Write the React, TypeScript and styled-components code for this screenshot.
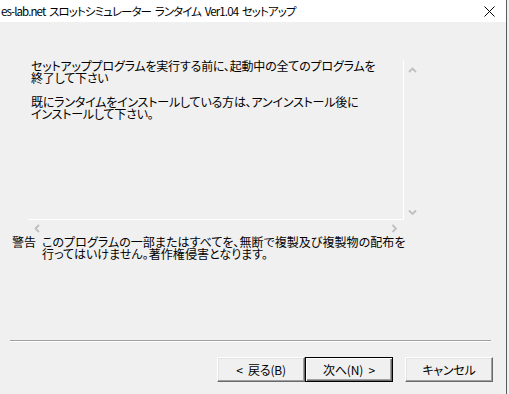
import React from "react";
import styled, { createGlobalStyle } from "styled-components";

const GlobalStyle = createGlobalStyle`
  html, body {
    margin: 0;
    padding: 0;
    background: #f0f0f0;
  }
  body {
    font-family: "Noto Sans CJK JP", "DejaVu Sans", sans-serif;
    font-size: 12px;
    color: #000;
    font-feature-settings: "palt";
  }
`;

const Window = styled.div`
  width: 507px;
  height: 394px;
  box-sizing: border-box;
  border-right: 1px solid #5c5c5c;
  background: #f0f0f0;
  display: flex;
  flex-direction: column;
`;

const TitleBar = styled.div`
  height: 22px;
  background: #ffffff;
  display: flex;
  align-items: center;
  justify-content: space-between;
  padding-left: 1px;
`;

const Title = styled.span`
  font-size: 11.5px;
  line-height: 22px;
  letter-spacing: -0.9px;
  word-spacing: 2px;
  white-space: nowrap;
`;

const CloseButton = styled.div`
  width: 30px;
  height: 22px;
  display: flex;
  align-items: center;
  justify-content: center;
  margin-right: 2px;
`;

const Body = styled.div`
  flex: 1;
  display: flex;
  flex-direction: column;
  padding-top: 38px;
`;

const Memo = styled.div`
  margin-left: 28px;
  display: grid;
  grid-template-columns: 376px 17px;
  grid-template-rows: 160px 17px;
  width: 393px;
`;

const MemoText = styled.div`
  box-sizing: border-box;
  border-right: 1px solid #ffffff;
  border-bottom: 1px solid #ffffff;
  padding-left: 3px;
  line-height: 12px;
  letter-spacing: -0.2px;
`;

const Para = styled.p`
  margin: 0 0 12px 0;
`;

const Corner = styled.div``;

const VScroll = styled.div`
  display: flex;
  flex-direction: column;
  justify-content: space-between;
  align-items: center;
  padding: 6px 0 3px 0;
`;

const HScroll = styled.div`
  display: flex;
  justify-content: space-between;
  align-items: center;
  padding: 0 5px;
`;

const Warning = styled.div`
  display: flex;
  margin: -1px 0 0 12px;
  line-height: 12px;
  letter-spacing: 0.05px;
`;

const WarnLabel = styled.span`
  width: 30px;
  flex: none;
`;

const WarnText = styled.div``;

const Separator = styled.div`
  margin: 80px 15px 0 10px;
  height: 1px;
  background: #a0a0a0;
  border-bottom: 1px solid #ffffff;
`;

const ButtonRow = styled.div`
  display: flex;
  justify-content: flex-end;
  margin: 15px 13px 0 0;
`;

const Button = styled.div<{ $default?: boolean; $gap?: number }>`
  box-sizing: border-box;
  width: 88px;
  height: 25px;
  margin-left: ${(p) => p.$gap ?? 0}px;
  display: flex;
  align-items: center;
  justify-content: center;
  background: #f0f0f0;
  border: 1px solid;
  border-color: ${(p) => (p.$default ? "#000000" : "#ffffff #696969 #696969 #ffffff")};
  box-shadow: ${(p) =>
    p.$default
      ? "inset 1px 1px 0 #ffffff, inset -1px -1px 0 #696969, inset -2px -2px 0 #a0a0a0"
      : "inset -1px -1px 0 #a0a0a0, inset 1px 1px 0 #e3e3e3"};
  font-size: 12px;
  letter-spacing: -0.2px;
  word-spacing: 3px;
  white-space: pre;
`;

const Chevron = ({ dir }: { dir: "up" | "down" | "left" | "right" }) => {
  const pts: Record<string, string> = {
    up: "1,6 4.5,2.5 8,6",
    down: "1,2.5 4.5,6 8,2.5",
    left: "6,1 2.5,4.5 6,8",
    right: "2.5,1 6,4.5 2.5,8",
  };
  return (
    <svg width="9" height="9" viewBox="0 0 9 9">
      <polyline points={pts[dir]} fill="none" stroke="#bfbfbf" strokeWidth="1.8" />
    </svg>
  );
};

export default function App() {
  return (
    <>
      <GlobalStyle />
      <Window>
        <TitleBar>
          <Title>es-lab.net スロットシミュレーター ランタイム Ver1.04 セットアップ</Title>
          <CloseButton>
            <svg width="11" height="11" viewBox="0 0 11 11">
              <path d="M0.5 0.5 L10.5 10.5 M10.5 0.5 L0.5 10.5" stroke="#000" strokeWidth="1" />
            </svg>
          </CloseButton>
        </TitleBar>
        <Body>
          <Memo>
            <MemoText>
              <Para>
                セットアッププログラムを実行する前に、起動中の全てのプログラムを
                <br />
                終了して下さい
              </Para>
              <Para>
                既にランタイムをインストールしている方は、アンインストール後に
                <br />
                インストールして下さい。
              </Para>
            </MemoText>
            <VScroll>
              <Chevron dir="up" />
              <Chevron dir="down" />
            </VScroll>
            <HScroll>
              <Chevron dir="left" />
              <Chevron dir="right" />
            </HScroll>
            <Corner />
          </Memo>
          <Warning>
            <WarnLabel>警告</WarnLabel>
            <WarnText>
              このプログラムの一部またはすべてを、無断で複製及び複製物の配布を
              <br />
              行ってはいけません。著作権侵害となります。
            </WarnText>
          </Warning>
          <Separator />
          <ButtonRow>
            <Button>{"< 戻る(B)"}</Button>
            <Button $default>{"次へ(N) >"}</Button>
            <Button $gap={12}>キャンセル</Button>
          </ButtonRow>
        </Body>
      </Window>
    </>
  );
}
